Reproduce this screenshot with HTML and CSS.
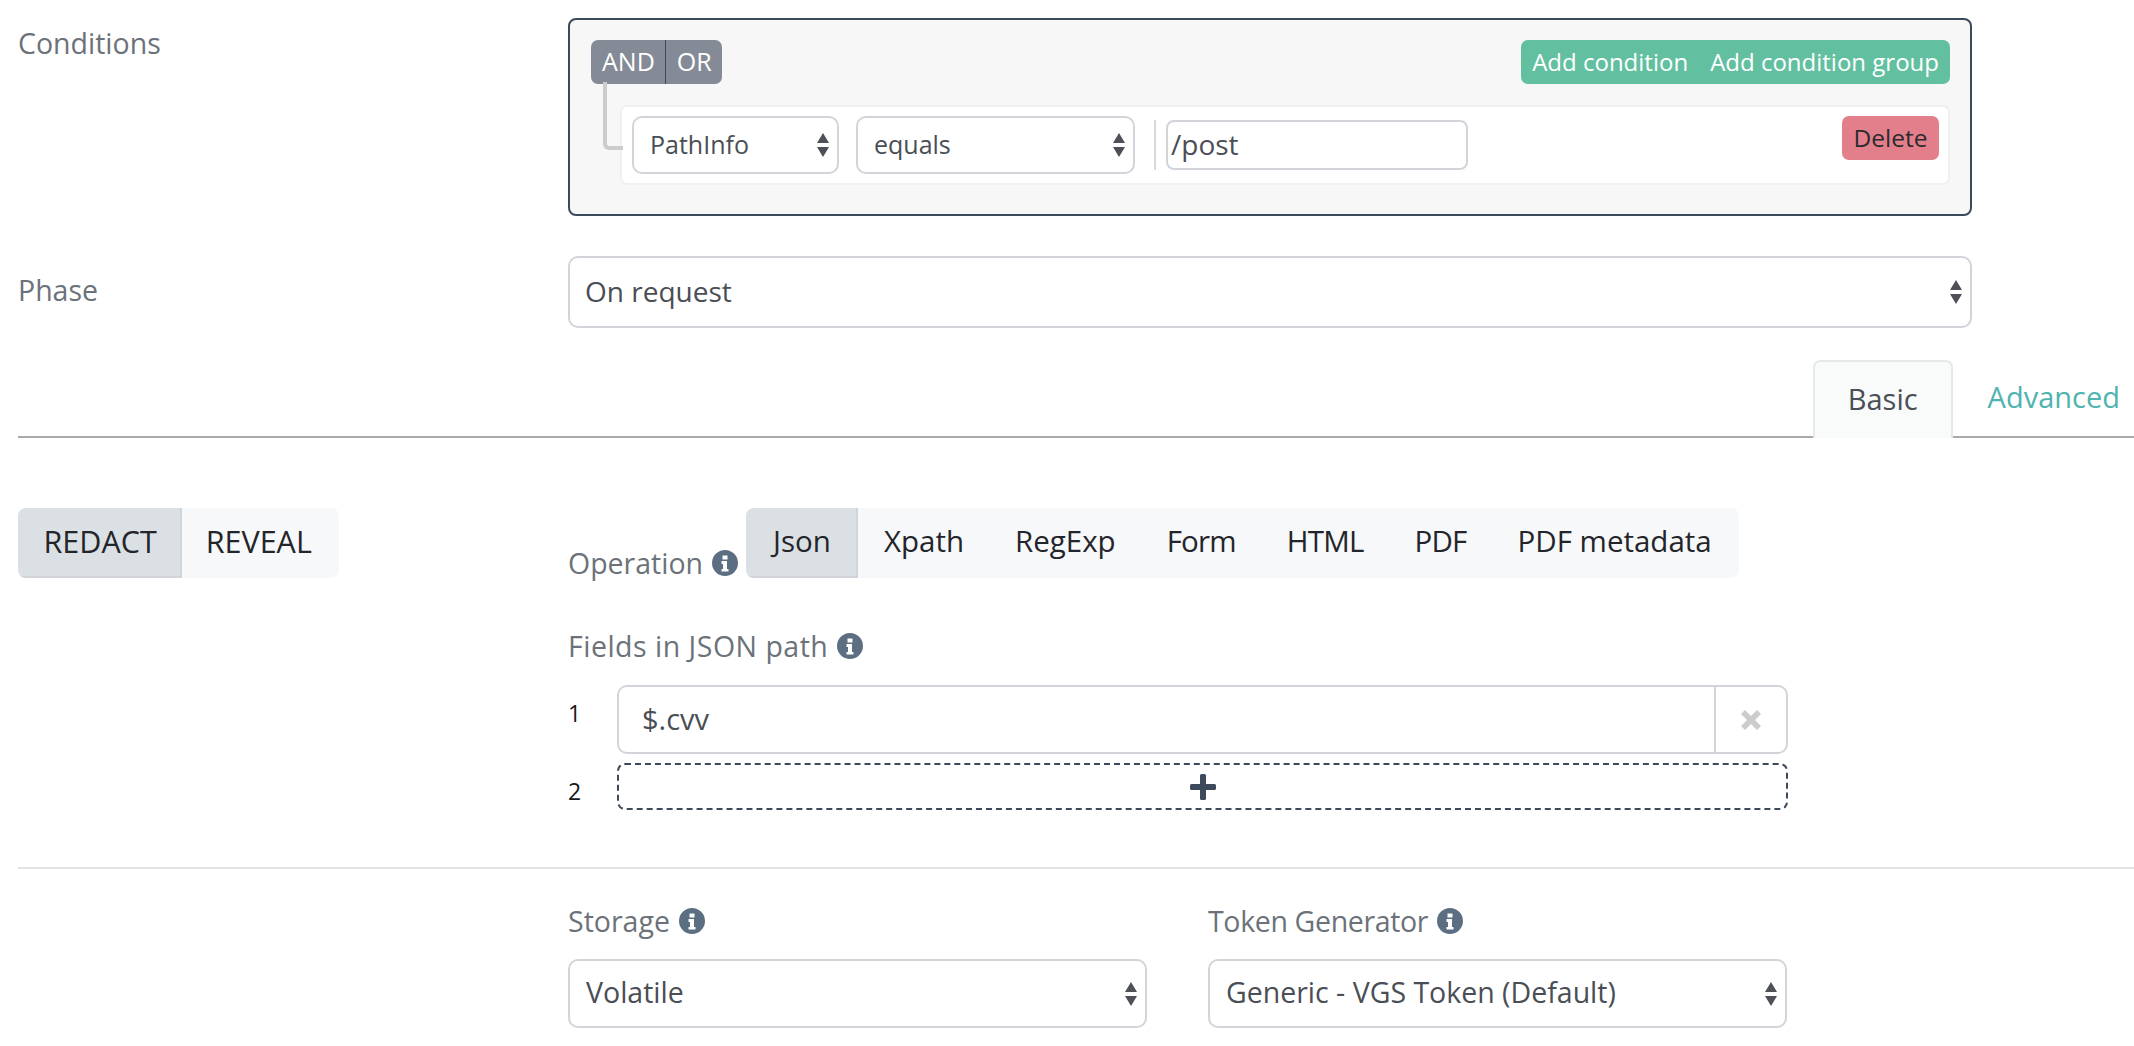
FILE: index.html
```html
<!DOCTYPE html>
<html lang="en">
<head>
  <meta charset="UTF-8" />
  <title>Filter</title>
  <link rel="stylesheet" href="styles.css">
</head>
<body>
  <svg class="defs" width="0" height="0">
    <symbol id="arrows" viewBox="0 0 12 24"><path d="M6 0l6 10H0zM0 14h12l-6 10z"/></symbol>
    <symbol id="info" viewBox="0 0 26 26"><path fill-rule="evenodd" d="M13 0a13 13 0 1 1 0 26a13 13 0 0 1 0-26zM10.500 5.500v4h5v-4zM9.500 11v3h1.500v5h-1.500v2.500h7v-2.500h-1.500v-8z"/></symbol>
  </svg>

  <div class="row row-conditions">
    <div class="side-label">Conditions</div>
    <div class="conditions">
      <div class="conditions-top">
        <div class="btn-group logic">
          <button class="logic-btn">AND</button>
          <button class="logic-btn">OR</button>
        </div>
        <div class="btn-group add">
          <button class="add-btn">Add condition</button>
          <button class="add-btn">Add condition group</button>
        </div>
      </div>
      <div class="connector"></div>
      <div class="rule">
        <div class="select-wrap select-field">
          <select><option>PathInfo</option></select>
          <svg class="arrows"><use href="#arrows"/></svg>
        </div>
        <div class="select-wrap select-op">
          <select><option>equals</option></select>
          <svg class="arrows"><use href="#arrows"/></svg>
        </div>
        <div class="rule-sep"></div>
        <input class="rule-value" type="text" value="/post" />
        <button class="delete-btn">Delete</button>
      </div>
    </div>
  </div>

  <div class="row">
    <div class="side-label phase-label">Phase</div>
    <div class="select-wrap select-big">
      <select><option>On request</option></select>
      <svg class="arrows"><use href="#arrows"/></svg>
    </div>
  </div>

  <div class="tabs">
    <a class="tab tab-active">Basic</a>
    <a class="tab tab-link">Advanced</a>
  </div>

  <div class="row row-action">
    <div class="toggle toggle-mode">
      <span class="toggle-item on">REDACT</span>
      <span class="toggle-item">REVEAL</span>
    </div>
    <div class="action-body">
      <div class="operation">
        <label class="field-label op-label">Operation <svg class="info"><use href="#info"/></svg></label>
        <div class="toggle">
          <span class="toggle-item on">Json</span>
          <span class="toggle-item">Xpath</span>
          <span class="toggle-item">RegExp</span>
          <span class="toggle-item tight">Form</span>
          <span class="toggle-item tight">HTML</span>
          <span class="toggle-item tight">PDF</span>
          <span class="toggle-item">PDF metadata</span>
        </div>
      </div>

      <label class="field-label fields-label">Fields in JSON path <svg class="info"><use href="#info"/></svg></label>

      <div class="path-row">
        <div class="path-num">1</div>
        <div class="path-input">
          <input type="text" value="$.cvv" />
          <button class="path-remove">
            <svg width="22" height="22" viewBox="0 0 22 22"><path d="M1 5l4-4 6 6 6-6 4 4-6 6 6 6-4 4-6-6-6 6-4-4 6-6z"/></svg>
          </button>
        </div>
      </div>
      <div class="path-row">
        <div class="path-num">2</div>
        <button class="path-add">
          <svg width="26" height="26" viewBox="0 0 26 26"><path d="M10 1.500q0-1.500 1.500-1.500h3q1.500 0 1.500 1.500v8.500h8.500q1.500 0 1.500 1.500v3q0 1.500-1.500 1.500h-8.500v8.500q0 1.500-1.500 1.500h-3q-1.500 0-1.500-1.500v-8.500h-8.500q-1.500 0-1.500-1.500v-3q0-1.500 1.500-1.500h8.500z"/></svg>
        </button>
      </div>
    </div>
  </div>

  <hr class="divider" />

  <div class="row">
    <div></div>
    <div class="storage">
      <div>
        <label class="field-label">Storage <svg class="info"><use href="#info"/></svg></label>
        <div class="select-wrap select-half">
          <select><option>Volatile</option></select>
          <svg class="arrows"><use href="#arrows"/></svg>
        </div>
      </div>
      <div>
        <label class="field-label token-label">Token Generator <svg class="info"><use href="#info"/></svg></label>
        <div class="select-wrap select-half">
          <select><option>Generic - VGS Token (Default)</option></select>
          <svg class="arrows"><use href="#arrows"/></svg>
        </div>
      </div>
    </div>
  </div>
</body>
</html>
```

FILE: styles.css
```css
* {
  box-sizing: border-box;
}

body {
  margin: 0;
  padding: 18px 0 0 18px;
  height: 1046px;
  overflow: hidden;
  background: #fff;
  font-family: "Open Sans", "Lato", sans-serif;
  font-size: 28.500px;
  color: #4a4e55;
}

button, select, input {
  font-family: inherit;
  color: inherit;
  margin: 0;
}

button {
  border: none;
  cursor: pointer;
}

.defs {
  position: absolute;
}

.row {
  display: grid;
  grid-template-columns: 550px 1404px;
}

.side-label {
  color: #6c7279;
  padding-top: 6px;
}

.phase-label {
  padding-top: 15px;
}

/* conditions box */
.conditions {
  position: relative;
  height: 198px;
  padding: 20px 20px 0 21px;
  background: #f7f7f7;
  border: 2px solid #3d4a5c;
  border-radius: 8px;
}

.row-conditions {
  margin-bottom: 40px;
}

.conditions-top {
  display: flex;
  justify-content: space-between;
}

.btn-group {
  display: flex;
  height: 44px;
  border-radius: 7px;
  overflow: hidden;
}

.logic-btn {
  padding: 0 10px 2px 11px;
  background: #848b96;
  color: #fff;
  font-size: 25px;
}

.logic-btn + .logic-btn {
  border-left: 1px solid #3d4a5c;
}

.add {
  background: #62c0a1;
}

.add-btn {
  padding: 0 11px 2px;
  background: none;
  color: #fff;
  font-size: 24px;
}

.connector {
  position: absolute;
  left: 33px;
  top: 62px;
  width: 20px;
  height: 68px;
  border-left: 4px solid #ccc;
  border-bottom: 4px solid #ccc;
  border-bottom-left-radius: 6px;
}

.rule {
  display: flex;
  align-items: flex-start;
  height: 80px;
  margin: 21px 0 0 29px;
  padding: 9px 9px 0 10px;
  background: #fff;
  border: 2px solid #f0f0f0;
  border-radius: 7px;
}

.rule-sep {
  width: 2px;
  height: 50px;
  margin: 4px 10px 0 19px;
  background: #d8d8d8;
}

.rule-value {
  width: 302px;
  height: 50px;
  margin-top: 4px;
  padding: 0 3px 2px;
  border: 2px solid #d1d5da;
  border-radius: 8px;
  font-size: 28px;
  outline: none;
}

.delete-btn {
  width: 97px;
  height: 44px;
  padding: 0 0 2px;
  margin-left: auto;
  background: #e27f8a;
  color: #2b2b2f;
  font-size: 24.500px;
  border-radius: 7px;
}

/* selects */
.select-wrap {
  position: relative;
}

.select-wrap select {
  display: block;
  width: 100%;
  height: 100%;
  padding: 0 30px 3px 16px;
  appearance: none;
  background: #fff;
  border: 2px solid #d1d5da;
  border-radius: 10px;
  font-size: 28.500px;
  outline: none;
}

.arrows {
  position: absolute;
  right: 10px;
  top: 50%;
  width: 12px;
  height: 24px;
  margin-top: -12px;
  fill: #4d5056;
  pointer-events: none;
}

.select-field {
  width: 207px;
  height: 58px;
  margin-right: 17px;
}

.select-op {
  width: 279px;
  height: 58px;
}

.select-field select,
.select-op select {
  font-size: 25px;
}

.select-big {
  height: 72px;
}

.select-big select {
  padding-left: 15px;
  font-size: 28px;
}

.select-half {
  height: 69px;
  margin-top: 22px;
}

/* tabs */
.tabs {
  display: flex;
  justify-content: flex-end;
  height: 78px;
  margin-top: 32px;
  border-bottom: 2px solid #aaa;
}

.tab {
  height: 78px;
  line-height: 74px;
  padding: 0 33px;
  font-size: 29px;
}

.tab-active {
  background: #f9fafa;
  border: 2px solid #e6e8ea;
  border-bottom: none;
  border-radius: 7px 7px 0 0;
  color: #4a4e55;
}

.tab-link {
  padding: 0 14px 0 35px;
  color: #4fb3b0;
}

/* redact / reveal and operation */
.row-action {
  margin-top: 70px;
}

.toggle {
  display: flex;
  align-self: start;
  justify-self: start;
  height: 70px;
  background: #f7f8fa;
  border-radius: 8px;
  overflow: hidden;
}

.toggle-item {
  padding: 0 25.500px;
  font-size: 29.500px;
  line-height: 66px;
  color: #23252a;
}

.toggle-item:last-child {
  padding-right: 27px;
}

.toggle-item.on {
  padding: 0 25.500px 0 27px;
  background: #dbe0e4;
  border-right: 2px solid #d1d5da;
  border-bottom: 2px solid #d1d5da;
}

.toggle-item.tight {
  letter-spacing: -.8px;
}

.toggle-mode .toggle-item {
  padding: 0 27px 0 24px;
  font-size: 30.500px;
}

.toggle-mode .toggle-item.on {
  padding: 0 23px 0 25.500px;
}

.field-label {
  display: flex;
  align-items: center;
  gap: 9px;
  height: 32px;
  color: #6c7279;
}

.operation {
  display: flex;
}

.op-label {
  margin: 39px 8px 0 0;
}

.fields-label {
  margin-top: 51px;
  letter-spacing: .5px;
}

.token-label {
  letter-spacing: -.35px;
}

.info {
  width: 26px;
  height: 26px;
  fill: #5c6f82;
}

.path-row {
  display: grid;
  grid-template-columns: 49px 1171px;
  margin-top: 9px;
}

.fields-label + .path-row {
  margin-top: 23px;
}

.path-num {
  padding-top: 12px;
  line-height: 32px;
  font-size: 23px;
  color: #16181c;
}

.path-input {
  display: flex;
  height: 69px;
  border: 2px solid #d1d5da;
  border-radius: 10px;
}

.path-input input {
  flex: 1;
  min-width: 0;
  padding: 0 23px 3px;
  border: none;
  background: none;
  border-radius: 10px;
  font-size: 29px;
  outline: none;
}

.path-remove {
  display: flex;
  align-items: center;
  justify-content: center;
  width: 72px;
  padding: 0;
  background: none;
  border-left: 2px solid #d1d5da;
  fill: #ccc;
}

.path-add {
  display: flex;
  align-items: center;
  justify-content: center;
  height: 47px;
  padding: 0;
  background: #fff;
  border: 2px dashed #3d4a5c;
  border-radius: 8px;
  fill: #3d4a5c;
}

.divider {
  height: 2px;
  margin: 57px 0 36px;
  border: none;
  background: #e4e4e4;
}

.storage {
  display: grid;
  grid-template-columns: 579px 579px;
  gap: 61px;
}
```
